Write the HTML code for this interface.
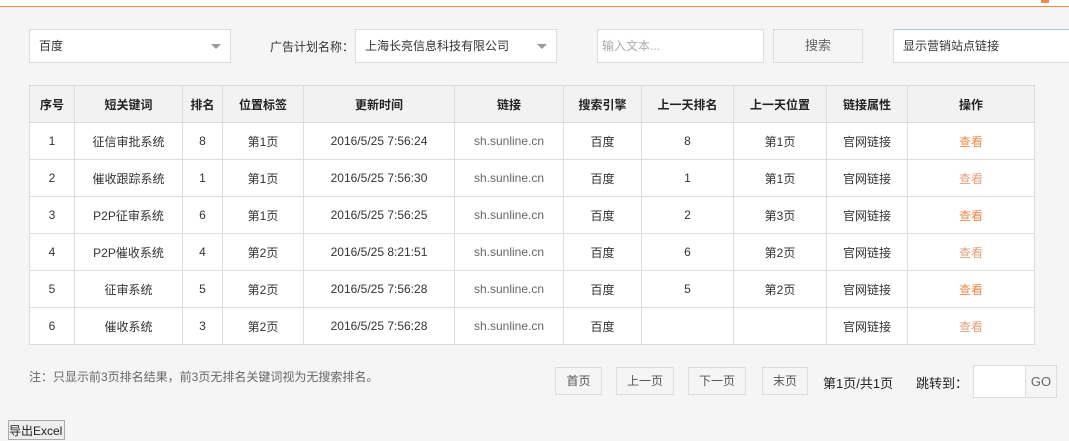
<!DOCTYPE html>
<html><head><meta charset="utf-8"><style>
*{box-sizing:border-box;margin:0;padding:0}
body{width:1069px;height:437px;background:#f5f5f5;font-family:"Liberation Sans","Noto Sans CJK SC",sans-serif;font-size:12px;color:#333;position:relative;overflow:hidden}
.top{position:absolute;left:0;top:0;width:1069px;height:7px;background:#fff;border-bottom:1px solid #e8884a}
.box{position:absolute;background:#fff;border:1px solid #ddd;height:34px;line-height:32px;padding-left:9px}
.arr{position:absolute;right:9px;top:14px;width:0;height:0;border-left:5px solid transparent;border-right:5px solid transparent;border-top:5px solid #999}
table{position:absolute;left:29px;top:85px;border-collapse:collapse;background:#fff}
td,th{border:1px solid #ddd;text-align:center;height:37px;font-size:12px}
th{background:#f2f2f2;font-weight:bold;color:#222}
.o{color:#f08a4b}.o2{color:#e0a080}
.btn{position:absolute;top:367px;height:28px;line-height:26px;border:1px solid #ddd;background:#f5f5f5;text-align:center;color:#555}
</style></head><body>
<div class="top"></div>
<div style="position:absolute;left:1041px;top:0;width:8px;height:3px;background:#f08a4b"></div>
<div class="box" style="left:29px;top:29px;width:202px">百度<span class="arr"></span></div>
<div style="position:absolute;left:270px;top:38px">广告计划名称：</div>
<div class="box" style="left:355px;top:29px;width:202px">上海长亮信息科技有限公司<span class="arr"></span></div>
<div class="box" style="left:597px;top:29px;width:167px;color:#aaa;padding-left:4px">输入文本...</div>
<div class="box" style="left:773px;top:29px;width:90px;text-align:center;padding:0;background:#f5f5f5;color:#666;font-size:13px">搜索</div>
<div class="box" style="left:893px;top:29px;width:180px;border-top-color:#a8c8f0">显示营销站点链接</div>
<table>
<tr><th style="width:45px">序号</th><th style="width:108px">短关键词</th><th style="width:40px">排名</th><th style="width:81px">位置标签</th><th style="width:151px">更新时间</th><th style="width:109px">链接</th><th style="width:78px">搜索引擎</th><th style="width:92px">上一天排名</th><th style="width:93px">上一天位置</th><th style="width:81px">链接属性</th><th style="width:127px">操作</th></tr>
<tr><td>1</td><td>征信审批系统</td><td>8</td><td>第1页</td><td>2016/5/25 7:56:24</td><td style="color:#666">sh.sunline.cn</td><td>百度</td><td>8</td><td>第1页</td><td>官网链接</td><td class="o">查看</td></tr>
<tr><td>2</td><td>催收跟踪系统</td><td>1</td><td>第1页</td><td>2016/5/25 7:56:30</td><td style="color:#666">sh.sunline.cn</td><td>百度</td><td>1</td><td>第1页</td><td>官网链接</td><td class="o2">查看</td></tr>
<tr><td>3</td><td>P2P征审系统</td><td>6</td><td>第1页</td><td>2016/5/25 7:56:25</td><td style="color:#666">sh.sunline.cn</td><td>百度</td><td>2</td><td>第3页</td><td>官网链接</td><td class="o">查看</td></tr>
<tr><td>4</td><td>P2P催收系统</td><td>4</td><td>第2页</td><td>2016/5/25 8:21:51</td><td style="color:#666">sh.sunline.cn</td><td>百度</td><td>6</td><td>第2页</td><td>官网链接</td><td class="o2">查看</td></tr>
<tr><td>5</td><td>征审系统</td><td>5</td><td>第2页</td><td>2016/5/25 7:56:28</td><td style="color:#666">sh.sunline.cn</td><td>百度</td><td>5</td><td>第2页</td><td>官网链接</td><td class="o">查看</td></tr>
<tr><td>6</td><td>催收系统</td><td>3</td><td>第2页</td><td>2016/5/25 7:56:28</td><td style="color:#666">sh.sunline.cn</td><td>百度</td><td></td><td></td><td>官网链接</td><td class="o2">查看</td></tr>
</table>
<div style="position:absolute;left:29px;top:368px;color:#666">注：只显示前3页排名结果，前3页无排名关键词视为无搜索排名。</div>
<div class="btn" style="left:555px;width:47px">首页</div>
<div class="btn" style="left:616px;width:58px">上一页</div>
<div class="btn" style="left:688px;width:58px">下一页</div>
<div class="btn" style="left:762px;width:46px">末页</div>
<div style="position:absolute;left:823px;top:373px;font-size:13px;color:#222">第1页/共1页</div>
<div style="position:absolute;left:916px;top:373px;font-size:13px;color:#222">跳转到：</div>
<div style="position:absolute;left:973px;top:365px;width:53px;height:33px;background:#fff;border:1px solid #ddd"></div>
<div style="position:absolute;left:1025px;top:365px;width:32px;height:33px;border:1px solid #ddd;line-height:31px;text-align:center;color:#666;font-size:13px">GO</div>
<div style="position:absolute;left:8px;top:420px;width:57px;height:20px;border:1px solid #aaa;background:#eee;font-size:12px;line-height:20px;color:#222">导出Excel</div>
</body></html>
